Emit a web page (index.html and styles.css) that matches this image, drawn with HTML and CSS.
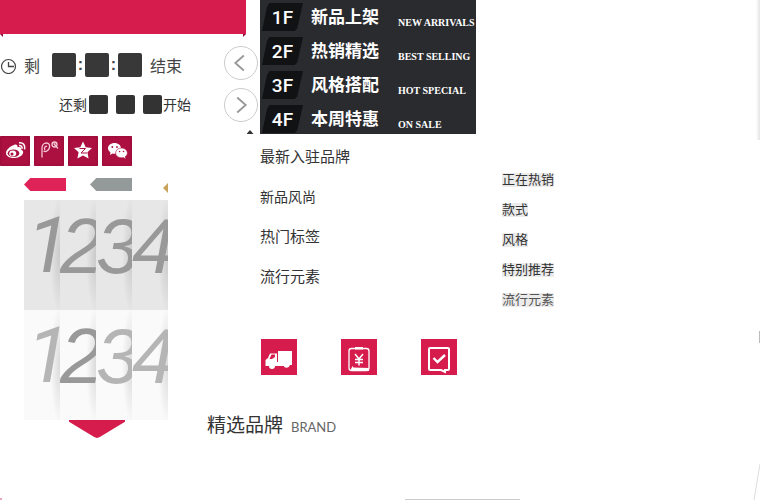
FILE: index.html
```html
<!DOCTYPE html>
<html lang="zh-CN">
<head>
<meta charset="utf-8">
<title>精选品牌</title>
<link rel="stylesheet" href="styles.css">
</head>
<body>
<div class="page">
  <div class="top">
    <div class="promo">
      <div class="banner"></div>
      <div class="folds"><i class="fold"></i><i class="fold fold-right"></i></div>
      <div class="promo-body">
        <div class="timers">
          <div class="timer">
            <svg class="clock" viewBox="0 0 17 17"><circle cx="8.5" cy="9.5" r="7" fill="none" stroke="#444" stroke-width="1.2"/><path d="M8.5 5v4.500H14" fill="none" stroke="#444" stroke-width="1.3"/></svg>
            <span class="timer-start">剩</span>
            <i class="box"></i><b class="colon">:</b><i class="box"></i><b class="colon">:</b><i class="box"></i>
            <span class="timer-end">结束</span>
          </div>
          <div class="timer timer-small">
            <span>还剩</span><i class="box"></i><i class="box"></i><i class="box"></i><span>开始</span>
          </div>
        </div>
        <div class="arrows">
          <button class="arrow" aria-label="上一个"><svg viewBox="0 0 34 34"><path d="M20 9l-9 8 9 8"/></svg></button>
          <button class="arrow" aria-label="下一个"><svg viewBox="0 0 34 34"><path d="M13 9l9 8-9 8"/></svg></button>
          <i class="caret"></i>
        </div>
      </div>
    </div>
    <nav class="floors">
      <a class="floor" href="#"><b class="floor-no">1F</b><span class="floor-name">新品上架</span><span class="floor-en">NEW ARRIVALS</span></a>
      <a class="floor" href="#"><b class="floor-no">2F</b><span class="floor-name">热销精选</span><span class="floor-en">BEST SELLING</span></a>
      <a class="floor" href="#"><b class="floor-no">3F</b><span class="floor-name">风格搭配</span><span class="floor-en">HOT SPECIAL</span></a>
      <a class="floor" href="#"><b class="floor-no">4F</b><span class="floor-name">本周特惠</span><span class="floor-en">ON SALE</span></a>
    </nav>
  </div>

  <div class="bottom">
    <div class="side">
      <div class="social">
        <a class="share" href="#" aria-label="微博"><svg viewBox="0 0 30 30"><path fill="#fff" d="M14 9c2-1 4 0 3.500 2.300 2.500-.8 4.500.2 3.700 2.400 2 .7 2.500 2.300 1.600 4.100C21.300 20.700 17.500 22 13.500 22 9 22 6 19.800 6 17c0-3 4.500-7.200 8-8z"/><ellipse cx="13.500" cy="17.200" rx="5.800" ry="3.800" fill="#ab1040"/><ellipse cx="12.700" cy="17.500" rx="3.500" ry="3" fill="#fff"/><circle cx="12" cy="18" r="1.500" fill="#ab1040"/><path d="M19 9.500c2-.3 3.500 1.200 3 3.300M19 6.800c4-.6 6.600 2.500 5.600 6.600" fill="none" stroke="#fff" stroke-width="1.600"/></svg></a>
        <a class="share" href="#" aria-label="拍拍"><svg viewBox="0 0 30 30"><g fill="none" stroke="#f4c9d5" stroke-width="1.300"><path d="M8 21.500V12c0-3 2-5 4.500-5S16 9 15.500 11.500 12 16.500 9.500 15"/><path d="M11 14c-1.500-2 .5-4.500 2-3.500"/><circle cx="20.500" cy="8.500" r="2.500"/><path d="M20.500 8.500l3.500 4M19.500 8h2" /></g></svg></a>
        <a class="share" href="#" aria-label="QQ空间"><svg viewBox="0 0 30 30"><path fill="#fff" d="M15 5.500l2.700 5.700 6.300.8-4.600 4.300 1.200 6.200L15 19.500l-5.600 3 1.200-6.200L6 12l6.300-.8z"/><path d="M11.500 12.500h6l-4.500 4.500h6" fill="none" stroke="#ab1040" stroke-width="1"/></svg></a>
        <a class="share" href="#" aria-label="微信"><svg viewBox="0 0 30 30"><path fill="#fff" d="M12.500 7C8.900 7 6 9.300 6 12.300c0 1.700 1 3.200 2.500 4.200L8 19l2.600-1.500c.6.100 1.200.2 1.900.2 3.600 0 6.500-2.400 6.500-5.400S16.100 7 12.500 7z"/><path fill="#fff" stroke="#ab1040" stroke-width=".6" d="M19.500 12c-3.300 0-5.900 2.200-5.900 4.900s2.600 4.900 5.900 4.900c.6 0 1.200-.1 1.700-.2l2.600 1.300-.6-2.200c1.300-.9 2.200-2.200 2.200-3.800 0-2.700-2.600-4.900-5.900-4.900z"/><g fill="#ab1040"><circle cx="10.300" cy="11" r=".9"/><circle cx="15" cy="11" r=".9"/><circle cx="17.600" cy="15.500" r=".8"/><circle cx="21.500" cy="15.500" r=".8"/></g></svg></a>
      </div>
      <div class="tags"><i class="tag"></i><i class="tag tag-grey"></i><i class="tag-tip"></i></div>
      <div class="numbers"><span class="plain">1</span><span>2</span><span>3</span><span>4</span></div>
      <div class="numbers numbers-light"><span class="plain">1</span><span class="on">2</span><span>3</span><span>4</span></div>
      <i class="pointer"></i>
    </div>
    <div class="content">
      <div class="menus">
        <ul class="menu">
          <li>最新入驻品牌</li>
          <li class="menu-sub">新品风尚</li>
          <li>热门标签</li>
          <li>流行元素</li>
        </ul>
        <ul class="hot">
          <li><span>正在热销</span></li>
          <li><span>款式</span></li>
          <li><span>风格</span></li>
          <li><span>特别推荐</span></li>
          <li><span class="soft">流行元素</span></li>
        </ul>
      </div>
      <div class="services">
        <svg class="service" viewBox="0 0 36 36"><path fill="#fff" d="M17 12h14v14h-2a3 3 0 0 1-5 1H14a3 3 0 0 1-6 0H4.500v-6l2.500-2 2-4.500h7V23h1z"/><path fill="#d51c4d" d="M10.500 15.500h3.500V18l-3 2H8.500z"/><circle cx="11" cy="26" r="2.800" fill="#fff"/><circle cx="25.500" cy="26" r="2.800" fill="#fff"/></svg>
        <svg class="service" viewBox="0 0 36 36"><rect x="8" y="9.500" width="20" height="22" rx="2.500" fill="none" stroke="#fff" stroke-width="1.300"/><path fill="#fff" d="M14 8h8v2.500h-8zM9 32l2.500-5 1 1.500L28 29v3z"/><path d="M14 15l4 5 4-5M18 20v6.500M14 20.500h8M14 23.500h8" fill="none" stroke="#fff" stroke-width="1.500"/></svg>
        <svg class="service" viewBox="0 0 36 36"><path d="M9 9h18q1 0 1 1v20q0 1-1 1h-3v2l-4-2H9q-1 0-1-1V10q0-1 1-1z" fill="none" stroke="#fff" stroke-width="2"/><path d="M12.500 19l4 4 7.500-7" fill="none" stroke="#fff" stroke-width="2.400"/></svg>
      </div>
      <h2 class="brand">精选品牌<small>BRAND</small></h2>
    </div>
  </div>
  <i class="edge-shadow"></i>
  <i class="edge-mark"></i>
  <svg class="edge-line" viewBox="0 0 7 36"><path d="M7 0L1 36" stroke="#ddd" fill="none"/></svg>
  <i class="base-line"></i>
  <i class="base-dot"></i>
</div>
</body>
</html>
```
FILE: styles.css
```css
* { box-sizing: border-box; }
body {
  margin: 0;
  background: #fff;
  color: #333;
  font-family: "Liberation Sans", "Noto Sans CJK SC", sans-serif;
}
i, b { display: block; }
ul { margin: 0; padding: 0; list-style: none; }
a { text-decoration: none; }
.page { position: relative; min-height: 100vh; overflow: hidden; }

.top { display: flex; align-items: flex-start; }
.promo { flex: none; width: 260px; }
.banner { height: 34px; margin-right: 14px; background: #d51c4d; }
.folds { display: flex; justify-content: space-between; margin-right: 14px; }
.fold { width: 3px; height: 3px; background: #8a0a35; clip-path: polygon(0 0, 100% 0, 100% 100%); }
.fold-right { clip-path: polygon(0 0, 100% 0, 0 100%); }
.promo-body { display: flex; justify-content: space-between; padding-right: 2px; }
.timers { padding-top: 16px; }
.timer { display: flex; align-items: center; height: 24px; font-size: 16px; color: #444; }
.clock { width: 17px; height: 17px; }
.timer-start { margin: 0 12px 0 7px; }
.timer-end { margin-left: 8px; }
.box { width: 24px; height: 24px; border-radius: 2px; background: #383838; }
.colon { width: 9px; text-align: center; line-height: 20px; }
.timer-small { gap: 8px; margin: 15px 0 0 59px; font-size: 14px; color: #333; }
.timer-small .box { width: 19px; height: 19px; background: #333; }
.timer-small span:first-child { margin-right: -6px; }
.timer-small span:last-child { margin-left: -7px; }
.arrows { display: flex; flex-direction: column; align-items: center; gap: 8px; padding-top: 9px; }
.arrow { width: 34px; height: 34px; padding: 0; border: 1px solid #ccc; border-radius: 50%; background: #fff; }
.arrow svg { display: block; width: 32px; height: 32px; fill: none; stroke: #999; stroke-width: 2; }
.caret { width: 7px; height: 4px; margin-left: 18px; background: #333; clip-path: polygon(50% 0, 100% 100%, 0 100%); }

.floors { width: 216px; height: 134px; overflow: hidden; background: #2a2b2f; }
.floor { display: grid; grid-template-columns: 51px 87px 1fr; align-items: center; height: 34px; color: #fff; }
.floor-no {
  width: 41px;
  height: 28px;
  margin-left: 2px;
  background: #111214;
  clip-path: polygon(18% 0, 100% 0, 86% 90%, 80% 100%, 0 100%, 12% 15%);
  font: 500 19px/29px Roboto, sans-serif;
  text-align: center;
}
.floor-name { padding-top: 2px; font-size: 17px; font-weight: 700; line-height: 32px; white-space: nowrap; }
.floor-en { padding-top: 11px; font: bold 10px/12px "Liberation Serif", serif; white-space: nowrap; }

.bottom { display: flex; align-items: flex-start; }
.side { flex: none; width: 207px; padding-top: 2px; }
.social { display: flex; gap: 4px; }
.share { width: 30px; height: 30px; border-radius: 1px; background: #ab1040; box-shadow: inset 0 0 3px #8f0b33; }
.share svg { display: block; }
.tags { display: flex; gap: 24px; width: 144px; height: 22px; margin: 12px 0 0 24px; overflow: hidden; }
.tag { flex: none; width: 42px; height: 13px; background: #df2359; clip-path: polygon(0 50%, 15% 0, 100% 0, 100% 100%, 15% 100%); }
.tag-grey { background: #949999; }
.tag-tip { flex: none; width: 5px; height: 10px; margin: 5px 0 0 7px; background: #c7a35b; clip-path: polygon(0 50%, 100% 0, 100% 100%); }
.numbers { display: grid; grid-template-columns: repeat(4, 36px); margin-left: 24px; }
.numbers span {
  height: 110px;
  overflow: hidden;
  background: radial-gradient(ellipse 10px 60px at 100% 50%, rgba(0, 0, 0, .13), transparent) #e7e7e7;
  color: #999;
  font-size: 78px;
  font-style: italic;
  line-height: 92px;
}
.numbers .plain { padding-left: 3px; font-family: Roboto, sans-serif; }
.numbers-light span { background-color: #fafafa; color: #b5b5b5; }
.numbers-light .on { color: #999; }
.pointer { width: 56px; height: 18px; margin-left: 69px; background: #d51c4d; clip-path: polygon(0 0, 100% 0, 100% 10%, 55% 95%, 50% 100%, 45% 95%, 0 10%); }

.content { flex: 1; }
.menus { display: flex; padding: 3px 0 0 53px; }
.menu { width: 242px; }
.menu li { height: 40px; font-size: 15px; line-height: 40px; color: #333; }
.menu .menu-sub { font-size: 14px; }
.hot { padding-top: 28px; }
.hot li { display: flex; align-items: center; height: 30px; }
.hot span { height: 14px; background: #ebebeb; font-size: 13px; line-height: 14px; color: #333; }
.hot .soft { color: #555; }
.services { display: flex; gap: 44px; padding: 24px 0 0 54px; }
.service { width: 36px; height: 36px; background: #d51c4d; }
.brand { margin: 36px 0 0; font-size: 19px; font-weight: 400; line-height: 30px; color: #333; }
.brand small { margin-left: 8px; font: 13px Lato, sans-serif; color: #666; }

.edge-shadow { position: absolute; top: 0; right: 0; width: 4px; height: 140px; background: linear-gradient(90deg, #fff, #e4e4e4); }
.edge-mark { position: absolute; top: 331px; right: 0; width: 1px; height: 12px; background: #bbb; }
.edge-line { position: absolute; right: 0; bottom: 0; width: 7px; height: 36px; }
.base-line { position: absolute; left: 405px; bottom: 0; width: 115px; height: 1px; background: #ccc; }
.base-dot { position: absolute; left: 0; bottom: 0; width: 2px; height: 2px; background: #eda5b9; }
```
